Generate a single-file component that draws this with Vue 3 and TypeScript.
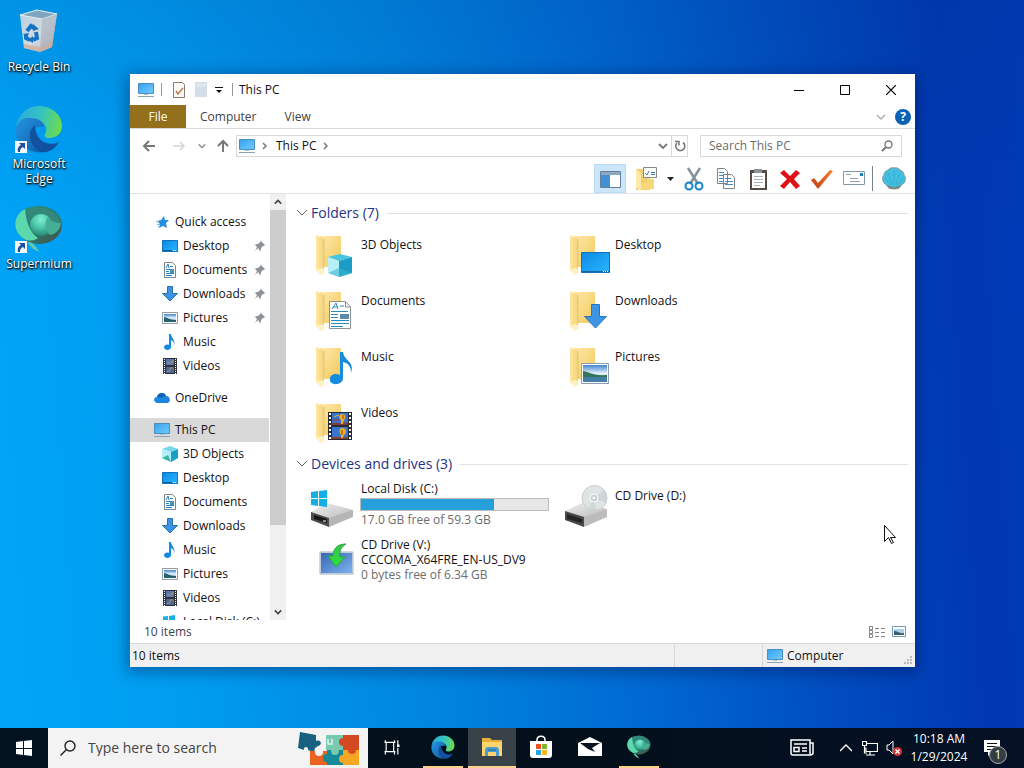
<script setup lang="ts">
import { ref } from 'vue'

interface NavItem { label: string; icon: string; pinned?: boolean }
interface NavGroup { label: string; icon: string; active?: boolean; children: NavItem[] }
interface Folder { label: string; icon: string }
interface Drive { label: string; icon: string; volume?: string; free?: string; used?: number }

const shortcuts = [
  { label: 'Recycle Bin', icon: 'bin', link: false },
  { label: 'Microsoft Edge', icon: 'edge', link: true },
  { label: 'Supermium', icon: 'supermium', link: true },
]

const navGroups: NavGroup[] = [
  {
    label: 'Quick access', icon: 'star', children: [
      { label: 'Desktop', icon: 'desktop', pinned: true },
      { label: 'Documents', icon: 'document', pinned: true },
      { label: 'Downloads', icon: 'download', pinned: true },
      { label: 'Pictures', icon: 'picture', pinned: true },
      { label: 'Music', icon: 'music' },
      { label: 'Videos', icon: 'video' },
    ],
  },
  { label: 'OneDrive', icon: 'cloud', children: [] },
  {
    label: 'This PC', icon: 'pc', active: true, children: [
      { label: '3D Objects', icon: 'cube' },
      { label: 'Desktop', icon: 'desktop' },
      { label: 'Documents', icon: 'document' },
      { label: 'Downloads', icon: 'download' },
      { label: 'Music', icon: 'music' },
      { label: 'Pictures', icon: 'picture' },
      { label: 'Videos', icon: 'video' },
      { label: 'Local Disk (C:)', icon: 'winlogo' },
    ],
  },
]

const folders: Folder[] = [
  { label: '3D Objects', icon: 'f-cube' },
  { label: 'Desktop', icon: 'f-desktop' },
  { label: 'Documents', icon: 'f-document' },
  { label: 'Downloads', icon: 'f-download' },
  { label: 'Music', icon: 'f-music' },
  { label: 'Pictures', icon: 'f-picture' },
  { label: 'Videos', icon: 'f-video' },
]

const drives: Drive[] = [
  { label: 'Local Disk (C:)', icon: 'hdd', free: '17.0 GB free of 59.3 GB', used: (59.3 - 17) / 59.3 },
  { label: 'CD Drive (D:)', icon: 'cd' },
  { label: 'CD Drive (V:)', icon: 'installer', volume: 'CCCOMA_X64FRE_EN-US_DV9', free: '0 bytes free of 6.34 GB' },
]

const tools = [
  { label: 'Navigation pane', icon: 't-pane', active: true },
  { label: 'Folder options', icon: 't-options' },
  { label: 'More options', icon: 't-drop', narrow: true },
  { label: 'Cut', icon: 't-cut' },
  { label: 'Copy', icon: 't-copy' },
  { label: 'Paste', icon: 't-paste' },
  { label: 'Delete', icon: 't-delete' },
  { label: 'Apply', icon: 't-check' },
  { label: 'Email', icon: 't-mail' },
]

const apps = [
  { label: 'Task view', icon: 'taskview' },
  { label: 'Microsoft Edge', icon: 'edge', open: true },
  { label: 'File Explorer', icon: 'explorer', open: true, active: true },
  { label: 'Store', icon: 'store' },
  { label: 'Mail', icon: 'mail' },
  { label: 'Supermium', icon: 'supermium', open: true },
]

const fileQuery = ref('')
const webQuery = ref('')
</script>

<template>
  <div class="screen">
    <svg class="defs" aria-hidden="true">
      <defs>
        <linearGradient id="gScreen" x1="0" y1="0" x2="1" y2="1"><stop offset="0" stop-color="#35a3ec" /><stop offset="1" stop-color="#72cbff" /></linearGradient>
        <linearGradient id="gDesk" x1="0" y1="0" x2="1" y2="1"><stop offset="0" stop-color="#0a8ae6" /><stop offset="1" stop-color="#2cb5ff" /></linearGradient>
        <linearGradient id="gFolder" x1="0" y1="0" x2="1" y2="1"><stop offset="0" stop-color="#ffe9a8" /><stop offset="1" stop-color="#f1c95c" /></linearGradient>
        <linearGradient id="gFlap" x1="0" y1="0" x2="1" y2="0"><stop offset="0" stop-color="#ffe7a1" /><stop offset="1" stop-color="#f3d27a" /></linearGradient>
        <linearGradient id="gBin" x1="0" y1="0" x2="1" y2="1"><stop offset="0" stop-color="#b9cfde" /><stop offset=".55" stop-color="#d2dae2" /><stop offset="1" stop-color="#b4b4b8" /></linearGradient>
        <linearGradient id="gEdgeTop" x1="0" y1=".4" x2="1" y2=".6"><stop offset="0" stop-color="#2aa9dd" /><stop offset=".5" stop-color="#35c4c0" /><stop offset="1" stop-color="#6fdc49" /></linearGradient>
        <linearGradient id="gEdgeLeft" x1="0" y1="0" x2="1" y2="1"><stop offset="0" stop-color="#2595e2" /><stop offset="1" stop-color="#0c59a4" /></linearGradient>
        <radialGradient id="gOrb" cx=".5" cy=".25" r=".8"><stop offset="0" stop-color="#7ff0cf" /><stop offset=".5" stop-color="#48c5a6" /><stop offset="1" stop-color="#227d6a" /></radialGradient>
        <linearGradient id="gDark" x1="0" y1="0" x2="1" y2="1"><stop offset="0" stop-color="#2c9482" /><stop offset=".6" stop-color="#2b7467" /><stop offset="1" stop-color="#504a40" /></linearGradient>
        <linearGradient id="gPhoto" x1="0" y1="0" x2="0" y2="1"><stop offset="0" stop-color="#3f83d0" /><stop offset=".5" stop-color="#e7f3fb" /><stop offset="1" stop-color="#7fb0d6" /></linearGradient>
        <linearGradient id="gMetal" x1="0" y1="0" x2="1" y2="1"><stop offset="0" stop-color="#f0f0f0" /><stop offset="1" stop-color="#b9b9b9" /></linearGradient>
        <linearGradient id="gInstall" x1="0" y1="0" x2="1" y2="1"><stop offset="0" stop-color="#3767b4" /><stop offset="1" stop-color="#7eb2ee" /></linearGradient>
        <linearGradient id="gGreen" x1="0" y1="0" x2="0" y2="1"><stop offset="0" stop-color="#36c44c" /><stop offset="1" stop-color="#2ee03c" /></linearGradient>
        <linearGradient id="gCheck" x1="1" y1="0" x2="0" y2="1"><stop offset="0" stop-color="#f5802e" /><stop offset="1" stop-color="#c43a12" /></linearGradient>
      </defs>

      <symbol id="bin" viewBox="0 0 48 48">
        <path d="M5 7 22 2 42 6 37 39 25 44 9 40Z" fill="url(#gBin)" />
        <path d="M5 7 22 2 42 6 27 11Z" fill="#7fa6c0" stroke="#e4eef4" />
        <path d="M27 11 42 6 37 39 25 44Z" fill="#9faab5" opacity=".5" />
        <path d="M9 36 25 39 38 34 37 39 25 44 9 40Z" fill="#d3aa98" opacity=".7" />
        <g fill="none" stroke="#1673c4" stroke-width="4"><path d="m12 23 4-5 3 2" /><path d="m21 24 1 6-4 2" /><path d="m15 32-4-2 0-4" /></g>
        <path d="m18 16 6 5-6 2zM18 28v7l-5-3zM8 26l6-1-2 5z" fill="#1673c4" />
      </symbol>

      <symbol id="edge" viewBox="0 0 48 48">
        <path d="M1 23C2 10 12 1 24 1c13 0 23 9 23 20 0 7-5 12-13 12-4 0-5-2-4-4 5-8-5-16-14-15C8 14 3 18 1 23Z" fill="url(#gEdgeTop)" />
        <path d="M1 24C2 17 8 12 16 13c8 0 13 4 13 9-8-2-15 4-13 13 2 8 8 12 15 12C14 50-1 38 1 24Z" fill="url(#gEdgeLeft)" />
        <path d="M20 20c-8 6-7 21 6 27 8 1 14-3 18-10-10 5-24 0-24-17Z" fill="#1250a0" />
      </symbol>

      <symbol id="supermium" viewBox="0 0 48 48">
        <ellipse cx="24" cy="20" rx="23" ry="19" fill="url(#gDark)" />
        <path d="M10 4C25-2 43 5 46 18c-5 1-9-2-12-6-7-3-14 2-18 8Z" fill="#32897a" />
        <path d="M10 4C11 16 15 28 23 33c-4 3-9 3-12 2C-3 28-3 11 10 4Z" fill="#5bd9ac" />
        <circle cx="26" cy="20" r="11" fill="url(#gOrb)" />
        <path d="M33 12c3 4 8 6 13 6-1 7-5 11-11 12-5-4-6-12-2-18Z" fill="#46ae95" />
        <path d="M13 37c6 0 8 6 12 10-6-2-10-5-12-10Z" fill="#64c8aa" />
      </symbol>

      <symbol id="shortcut" viewBox="0 0 12 12"><path d="M0 0h12v12H0z" fill="#f4f7fb" /><path d="M3 11C2 7 4 5 6 4L4 2h6v6L8 6C6 7 5 8 5 11Z" fill="#1c4f9c" /></symbol>

      <symbol id="pc" viewBox="0 0 18 16"><path d="M1.500 1.500h15v10h-15z" fill="url(#gScreen)" stroke="#4a8fbd" /><path d="M7 12.500h4" stroke="#b5c3cc" /><path d="M1 14.500h16" stroke="#8ba3b2" /></symbol>
      <symbol id="star" viewBox="0 0 16 16"><path d="m10 2 1 4 4 0-3 3 1 5-4-2-4 2 1-4-3-3 4-1z" fill="#278ee0" /><path d="M3 10.500h3M4 12.500h2M2 7.500h3" stroke="#79b9eb" /></symbol>
      <symbol id="desktop" viewBox="0 0 16 16"><path d="M.500 2.500h15v11H.500z" fill="url(#gDesk)" stroke="#1272bd" /><path d="M1 12.500h9" stroke="#125895" /><path d="M11 12.500h4" stroke="#fff" stroke-dasharray="1 1" /></symbol>
      <symbol id="document" viewBox="0 0 16 16"><path d="M2.500.500h8l3 3v12h-11z" fill="#fff" stroke="#7c8790" /><path d="m4 6 2-4 1 4M8 4.500h3M4 7.500h8M4 9.500h3M4 11.500h8M4 13.500h6" fill="none" stroke="#2681bc" /><path d="M8 7h4v4H8z" fill="#4b92b9" /></symbol>
      <symbol id="download" viewBox="0 0 16 16"><path d="M5.500.500h5v7h5L8 15 .500 7.500h5z" fill="#3d94e5" stroke="#2572b5" /></symbol>
      <symbol id="picture" viewBox="0 0 16 16"><path d="M.500 2.500h15v11H.500z" fill="#fff" stroke="#8e9ba5" /><path d="M2 4h12v8H2z" fill="url(#gPhoto)" /><path d="M2 7c3 0 5 3 12 3v2H2z" fill="#28616b" /></symbol>
      <symbol id="music" viewBox="0 0 16 16"><path d="M7 0h2c0 4 5 6 3 11 0-3-1-4-3-5v7c0 4-7 4-7 0 0-2 3-3 5-2z" fill="#148bdc" /></symbol>
      <symbol id="video" viewBox="0 0 16 16"><path d="M1 0h14v16H1z" fill="#30343a" /><path d="M4 1h8v6H4z" fill="#5878b5" /><path d="M4 9h8v6H4z" fill="#4763a0" /><path d="M5 5h5V3h2M5 13h3v-3h3" stroke="#a89a50" fill="none" /><path d="M2.500 1v15M13.500 1v15" stroke="#fff" stroke-dasharray="1 1" /></symbol>
      <symbol id="cloud" viewBox="0 0 16 16"><path d="M4 13C-1 13-1 7 3 7c1-5 8-5 9-1 5 0 5 7 1 7z" fill="#1d86df" /><path d="M3 7c1-5 8-5 9-1-2 0-3 1-4 2-2-1-3-1-5-1Z" fill="#0b66b8" /></symbol>
      <symbol id="cube" viewBox="0 0 16 16"><path d="m0 3 8-3 8 3-7 3z" fill="#76d8ec" /><path d="m0 3 9 3v10l-9-4z" fill="#b5effa" /><path d="m9 6 7-3v9l-7 4z" fill="#159fc3" /><path d="m0 12 6-3 3 7z" fill="#38b7aa" /></symbol>
      <symbol id="winlogo" viewBox="0 0 16 16"><path d="M1 2.500 6 2v4H1zM7 2l6-1v5H7zM1 7h5v4l-5-1zM7 7h6v5l-6-1z" fill="#18b1e5" /></symbol>
      <symbol id="pin" viewBox="0 0 12 12"><path d="m7 1 4 4-1 1-1 0-2 2 0 2-1 1-2-3-3 3 2-4-2-2 1-1 2 0 2-2z" fill="#8f9499" /></symbol>

      <symbol id="folder" viewBox="0 0 48 48"><path d="M7 4h21v31H7z" fill="url(#gFolder)" /><path d="M3 3 11 7v33l-3 3-5-5z" fill="url(#gFlap)" /><path d="M11 7v28" stroke="#e2c170" /><path d="m3 38 5-2 4 2-4 5z" fill="#fff1c6" /></symbol>
      <symbol id="f-cube" viewBox="0 0 48 48"><use href="#folder" /><path d="m15 25 12-3 12 3-13 4z" fill="#49c3e2" /><path d="m15 25 11 4v16l-11-4z" fill="#b9effa" /><path d="m26 29 13-4v16l-13 4z" fill="#199dc5" /><path d="m15 41 11-5 13 5-13 4z" fill="#38b6cf" opacity=".6" /></symbol>
      <symbol id="f-desktop" viewBox="0 0 48 48"><use href="#folder" /><path d="M14.500 20.500h28v20h-28z" fill="url(#gDesk)" stroke="#1571b4" /><path d="M15 39.500h27" stroke="#1565a4" /><path d="M36 39.500h6" stroke="#fff" stroke-dasharray="1 1" /></symbol>
      <symbol id="f-document" viewBox="0 0 48 48"><use href="#folder" /><path d="M16.500 13.500h16l5 5v22h-21z" fill="#fff" stroke="#8a9298" /><path d="M32.500 14v5h5" fill="#eef2f5" stroke="#8a9298" /><path d="m19 21 4-6 2 6m-5-2h4m3-1h4M18 23.500h17M18 26.500h7M18 29.500h7M18 32.500h18M18 35.500h18M18 38.500h12" fill="none" stroke="#2b88be" /><path d="M27 26h9v5h-9z" fill="#5b89a8" /></symbol>
      <symbol id="f-download" viewBox="0 0 48 48"><use href="#folder" /><path d="M24.500 16.500h8v12h7L28.500 40 17.500 28.500h7z" fill="#3e95e6" stroke="#2576be" /></symbol>
      <symbol id="f-music" viewBox="0 0 48 48"><use href="#folder" /><path d="M27 8h3c1 9 12 9 8 21 0-7-3-10-8-11v16c0 8-14 8-13 1 0-5 6-6 10-4z" fill="#148bdc" /></symbol>
      <symbol id="f-picture" viewBox="0 0 48 48"><use href="#folder" /><path d="M14.500 19.500h27v20h-27z" fill="#fff" stroke="#8b9fae" /><path d="M16 21h24v17H16z" fill="url(#gPhoto)" /><path d="M16 27c4 0 9 5 24 4v2H16z" fill="#357557" /><path d="M16 33h24v5H16z" fill="#437fa7" /></symbol>
      <symbol id="f-video" viewBox="0 0 48 48"><use href="#folder" /><path d="M15 12h24v28H15z" fill="#292b2f" /><path d="M19 13h16v12H19zM19 27h16v12H19z" fill="#3975cf" /><path d="M18 24c5-3 11 1 17-1v2H18zM18 37h17v2H18z" fill="#843f36" /><path d="M29 14c4 0 4 4 2 6l-1 4h-2l0-4c-2-2-2-6 1-6ZM29 28c5 0 5 5 2 7l-1 3h-2v-3c-2-2-2-7 1-7Z" fill="#e9b322" /><path d="M20 20h6m4 3h5M30 15v4M29 30v5" stroke="#b02d2d" /><path d="m21 17 4-2 2 2" fill="none" stroke="#d2b44b" /><path d="M17 13v27M37 13v27" stroke="#fff" stroke-width="2" stroke-dasharray="2 2" /></symbol>
      <symbol id="hdd" viewBox="0 0 48 48"><path d="m2 29 16-9 26 7-20 10z" fill="url(#gMetal)" /><path d="m2 29 18 6v9L2 37z" fill="#4b4b4b" /><path d="m20 35 24-8v7L20 44z" fill="#b5b5b5" /><path d="m5 32 13 4v4L5 36z" fill="#171717" /><path d="M14 38h3" stroke="#fff" /><path d="M2 9 9 8v7H2zM10 8l8-1v8h-8zM2 16h7v7l-7-1zM10 16h8v8l-8-1z" fill="#15aee2" /></symbol>
      <symbol id="cd" viewBox="0 0 48 48"><path d="m2 28 17-8 25 6-23 9z" fill="url(#gMetal)" /><path d="m2 28 19 6v10L2 37z" fill="#484848" /><path d="m21 34 23-8v8L21 44z" fill="#bcbcbc" /><path d="m4 31 15 5v4L4 36z" fill="#242424" /><circle cx="31.500" cy="15" r="12.500" fill="#dfe4e4" stroke="#c7cdce" /><path d="m31 15 10-8c3 4 4 8 2 13zM31 15l2 12-7-1z" fill="#c2cecc" opacity=".6" /><circle cx="31" cy="15" r="4" fill="#c9cece" stroke="#fff" /><circle cx="31" cy="15" r="1.500" fill="#fff" /></symbol>
      <symbol id="installer" viewBox="0 0 48 48"><path d="M7 13h33v22H7z" fill="#dbe5ec" stroke="#a3b2be" /><path d="M8 14h31v20H8z" fill="url(#gInstall)" /><path d="M33 5c-9 0-13 5-13 12h-5l8 11 9-10h-5c-1-6 1-10 6-13z" fill="url(#gGreen)" stroke="#27a741" /></symbol>

      <symbol id="t-pane" viewBox="0 0 24 24"><path d="M2.500 4.500h20v16h-20z" fill="#fff" stroke="#68819b" /><path d="M3 5h19v3H3z" fill="#8da8c1" /><path d="M3 8h9v12H3z" fill="#4391d4" /><path d="M12.500 8v12" stroke="#fff" /></symbol>
      <symbol id="t-options" viewBox="0 0 24 24"><path d="M1 2h14v21H1z" fill="#f0d070" /><path d="M1 2 6 6v18l-5-3z" fill="#ffe9a7" /><path d="M12 12h7v10H6v-6h6z" fill="#f6d879" /><path d="M8.500.500h13v10h-13z" fill="#fff" stroke="#888" /><path d="m10 6 2 2 2-4M16 5.500h4M16 7.500h4" fill="none" stroke="#397cad" /></symbol>
      <symbol id="t-drop" viewBox="0 0 12 24"><path d="M2 10h7l-3.500 4z" fill="#222" /></symbol>
      <symbol id="t-cut" viewBox="0 0 24 24"><path d="M6 1 16 17M18 1 8 17" stroke="#85939b" stroke-width="2.500" /><circle cx="7" cy="19" r="3.500" fill="none" stroke="#1685c5" stroke-width="2" /><circle cx="17" cy="19" r="3.500" fill="none" stroke="#1685c5" stroke-width="2" /></symbol>
      <symbol id="t-copy" viewBox="0 0 24 24"><path d="M3.500 1.500h7l3 3v12h-10zM9.500 7.500h8l3 3v11h-11z" fill="#fff" stroke="#79838b" /><path d="M5 5.500h5M5 8.500h4M5 11.500h4M5 14.500h4M11 11.500h6M11 14.500h8M11 17.500h8" stroke="#438dc3" /></symbol>
      <symbol id="t-paste" viewBox="0 0 24 24"><path d="M4 3h17v20H4z" fill="#574b43" /><path d="M6 6h13v15H6z" fill="#fff" /><path d="M8 2h8v4H8z" fill="#89939a" /><path d="M8 9.500h9M8 12.500h9M8 15.500h9M8 18.500h6" stroke="#a9b1b7" /></symbol>
      <symbol id="t-delete" viewBox="0 0 24 24"><path d="m6 3 6 6 6-6 4 3-6 6 6 7-4 3-6-7-6 7-4-3 7-7-7-6z" fill="#e01019" /></symbol>
      <symbol id="t-check" viewBox="0 0 24 24"><path d="m1 13 3-2 4 5L20 3l3 1L8 22z" fill="url(#gCheck)" /></symbol>
      <symbol id="t-mail" viewBox="0 0 24 24"><path d="M1.500 4.500h21v13h-21z" fill="#fff" stroke="#8298a7" /><path d="M4 7.500h5M8 11.500h8M8 14.500h10" stroke="#91a2ad" /><path d="M18 6h3v3h-3z" fill="#1681c6" /></symbol>
      <symbol id="shell" viewBox="0 0 24 24"><path d="M12 1C9 0 7 2 6 3 3 4 2 6 2 8 0 10 0 13 2 16c3 2 4 6 10 6s7-4 10-6c2-3 2-6 0-8 0-2-1-4-4-5-1-1-3-3-6-2Z" fill="#43bfe2" stroke="#8c9797" /><path d="M12 18V4M10 18 6 6M14 18l4-12M8 18l-5-7M16 18l5-7" stroke="#35aed1" /><path d="m5 18 7 2 7-2-2 4H7z" fill="#8a7461" opacity=".6" /></symbol>

      <symbol id="taskview" viewBox="0 0 24 24"><path d="M4 7V4M15 7V4M3 6.500h13M5 7v10M14 7v10M3 17.500h13M4 21v-3M15 21v-3M19 4v6M19 13v8" stroke="#fff" stroke-width="1.400" /><path d="M18 9h3v3h-3z" fill="#fff" /></symbol>
      <symbol id="explorer" viewBox="0 0 24 24"><path d="M2 3h8l2 2h10v5H2z" fill="#e9ad39" /><path d="M2 7h20v14H2z" fill="#ffd66d" /><path d="M5 21v-7l2-2h10l2 2v7h-3v-4H8v4z" fill="#4b9bcd" /><path d="M8 15h8" stroke="#226b9b" /></symbol>
      <symbol id="store" viewBox="0 0 24 24"><path d="M8 8V5c0-5 8-5 8 0v3" fill="none" stroke="#fff" stroke-width="1.500" /><path d="M1 6h22v14c0 2-1 3-3 3H4c-2 0-3-1-3-3z" fill="#fff" /><path d="M7 9h5v5H7z" fill="#ef5125" /><path d="M13 9h5v5h-5z" fill="#7cb528" /><path d="M7 15h5v5H7z" fill="#23a6dd" /><path d="M13 15h5v5h-5z" fill="#f9b817" /></symbol>
      <symbol id="mail" viewBox="0 0 24 24"><path d="m0 8 12-6 12 6v13H0z" fill="#fff" /><path d="m2 8 20 0-8 5 3 4-7-3z" fill="#071321" /></symbol>
      <symbol id="puzzle" viewBox="0 0 64 38"><path d="m3 3 16 3v6c5-2 7 4 2 5l-3 2-1 4-6-2c1-4-5-4-4 0l-6-2z" fill="#176080" /><path d="M13 22h17v14H13z" fill="#e86420" /><path d="M29 6h17v15H29z" fill="#77c9b0" /><path d="M46 6h16v15H46z" fill="#d44923" /><path d="M30 21h17v15H30z" fill="#168b98" /><path d="M46 21h16v15H46z" fill="#f5a722" /><circle cx="22" cy="23" r="4" fill="#f2f2f2" /><circle cx="30" cy="29" r="4" fill="#168b98" /><circle cx="38" cy="22" r="4" fill="#77c9b0" /><circle cx="46" cy="13" r="4" fill="#d44923" /><circle cx="46" cy="30" r="4" fill="#f5a722" /><circle cx="55" cy="21" r="4" fill="#d44923" /><path d="M31 10v5h3m1-5v6" fill="none" stroke="#dff5ed" stroke-width="1.500" /></symbol>
    </svg>

    <main class="desk">
      <nav class="shortcuts" aria-label="Desktop">
        <button v-for="item in shortcuts" :key="item.label" class="shortcut">
          <span class="shortcut-pic">
            <svg class="i48"><use :href="'#' + item.icon" /></svg>
            <svg v-if="item.link" class="shortcut-arrow"><use href="#shortcut" /></svg>
          </span>
          <span class="shortcut-label">{{ item.label }}</span>
        </button>
      </nav>

      <section class="window" aria-label="This PC">
        <header class="titlebar">
          <svg class="pc-icon"><use href="#pc" /></svg>
          <span class="vline"></span>
          <button class="plain quick" aria-label="Properties"><svg viewBox="0 0 14 16" class="sheet"><path d="M1.500.500h9l2 2v13h-11z" fill="#fbf9f6" stroke="#8a7b72" /><path d="m4 9 2 3 5-6" fill="none" stroke="#b98058" stroke-width="1.500" /></svg></button>
          <button class="plain quick" aria-label="New folder"><svg viewBox="0 0 14 16" class="sheet"><path d="M1 0h12v15H1z" fill="#d5dde8" /><path d="M2 1h10v4H2z" fill="#dfe5ee" /></svg></button>
          <button class="plain drop" aria-label="Customize"><svg viewBox="0 0 8 8" class="i8"><path d="M0 1.500h8" stroke="#111" /><path d="M1 4h6L4 7z" fill="#111" /></svg></button>
          <span class="vline"></span>
          <span class="title">This PC</span>
          <div class="caption">
            <button class="plain" aria-label="Minimize"><svg viewBox="0 0 10 10" class="i10"><path d="M0 5.500h10" stroke="#000" /></svg></button>
            <button class="plain" aria-label="Maximize"><svg viewBox="0 0 10 10" class="i10"><path d="M.500.500h9v9h-9z" fill="none" stroke="#000" /></svg></button>
            <button class="plain" aria-label="Close"><svg viewBox="0 0 10 10" class="i10"><path d="m0 0 10 10M10 0 0 10" stroke="#000" stroke-width="1.200" /></svg></button>
          </div>
        </header>

        <div class="tabs">
          <button class="tab file">File</button>
          <button class="tab">Computer</button>
          <button class="tab">View</button>
          <span class="grow"></span>
          <button class="plain" aria-label="Expand ribbon"><svg viewBox="0 0 10 10" class="i10"><path d="m1 3 4 4 4-4" fill="none" stroke="#aaa" stroke-width="1.300" /></svg></button>
          <button class="help" aria-label="Help">?</button>
        </div>

        <div class="address-row">
          <button class="plain arrow" aria-label="Back"><svg viewBox="0 0 16 16" class="i16"><path d="M14 8H3m5-5L3 8l5 5" fill="none" stroke="#777" stroke-width="2" /></svg></button>
          <button class="plain arrow" aria-label="Forward"><svg viewBox="0 0 16 16" class="i16"><path d="M2 8h11M9 4l4 4-4 4" fill="none" stroke="#d4d4d4" stroke-width="1.500" /></svg></button>
          <button class="plain recent" aria-label="Recent locations"><svg viewBox="0 0 10 10" class="i8"><path d="m1 3 4 4 4-4" fill="none" stroke="#999" stroke-width="2" /></svg></button>
          <button class="plain up" aria-label="Up"><svg viewBox="0 0 16 16" class="i16"><path d="M8 14V3M3 8l5-5 5 5" fill="none" stroke="#777" stroke-width="2" /></svg></button>
          <div class="address">
            <svg class="pc-icon"><use href="#pc" /></svg>
            <svg viewBox="0 0 8 8" class="crumb"><path d="m2 1 3 3-3 3" fill="none" stroke="#777" stroke-width="1.500" /></svg>
            <a href="#this-pc">This PC</a>
            <svg viewBox="0 0 8 8" class="crumb"><path d="m2 1 3 3-3 3" fill="none" stroke="#777" stroke-width="1.500" /></svg>
            <span class="grow"></span>
            <button class="plain previous" aria-label="Previous locations"><svg viewBox="0 0 10 10" class="i10"><path d="m1 3 4 4 4-4" fill="none" stroke="#777" stroke-width="1.800" /></svg></button>
            <button class="plain refresh" aria-label="Refresh"><svg viewBox="0 0 12 12" class="i12"><path d="M9 2.500A4.500 4.500 0 1 1 3 3" fill="none" stroke="#777" stroke-width="1.600" /><path d="M1 1.500h4v4" fill="none" stroke="#777" stroke-width="1.500" /></svg></button>
          </div>
          <label class="find">
            <input v-model="fileQuery" type="text" placeholder="Search This PC" aria-label="Search This PC" />
            <svg viewBox="0 0 12 12" class="i12"><circle cx="7.500" cy="4.500" r="3.500" fill="none" stroke="#777" stroke-width="1.400" /><path d="M5 7 1 11" stroke="#777" stroke-width="2" /></svg>
          </label>
        </div>

        <div class="toolbar">
          <button v-for="tool in tools" :key="tool.label" class="plain tool" :class="{ on: tool.active, narrow: tool.narrow }" :aria-label="tool.label">
            <svg :class="tool.narrow ? 'i12x24' : 'i24'"><use :href="'#' + tool.icon" /></svg>
          </button>
          <span class="tool-line"></span>
          <button class="plain tool" aria-label="Shell"><svg class="i24"><use href="#shell" /></svg></button>
        </div>

        <div class="body">
          <nav class="tree" aria-label="Folders">
            <ul>
              <li v-for="group in navGroups" :key="group.label" class="group">
                <a href="#folder" class="node root" :class="{ on: group.active }"><svg :class="group.icon === 'pc' ? 'pc-icon' : 'i16'"><use :href="'#' + group.icon" /></svg><span>{{ group.label }}</span></a>
                <ul v-if="group.children.length">
                  <li v-for="child in group.children" :key="child.label">
                    <a href="#folder" class="node"><svg class="i16"><use :href="'#' + child.icon" /></svg><span>{{ child.label }}</span><svg v-if="child.pinned" class="pin"><use href="#pin" /></svg></a>
                  </li>
                </ul>
              </li>
            </ul>
          </nav>
          <div class="scroll">
            <button class="plain scroll-button" aria-label="Scroll up"><svg viewBox="0 0 10 10" class="i8"><path d="m1 7 4-4 4 4" fill="none" stroke="#444" stroke-width="2" /></svg></button>
            <div class="thumb"></div>
            <div class="track"></div>
            <button class="plain scroll-button" aria-label="Scroll down"><svg viewBox="0 0 10 10" class="i8"><path d="m1 3 4 4 4-4" fill="none" stroke="#444" stroke-width="2" /></svg></button>
          </div>

          <div class="content">
            <section>
              <h2><svg viewBox="0 0 12 12" class="i12"><path d="m1 3 5 5 5-5" fill="none" stroke="#666" /></svg>Folders (7)<span class="rule"></span></h2>
              <div class="grid">
                <a v-for="folder in folders" :key="folder.label" href="#folder" class="item"><svg class="i48"><use :href="'#' + folder.icon" /></svg><span class="text">{{ folder.label }}</span></a>
              </div>
            </section>
            <section class="devices">
              <h2><svg viewBox="0 0 12 12" class="i12"><path d="m1 3 5 5 5-5" fill="none" stroke="#666" /></svg>Devices and drives (3)<span class="rule"></span></h2>
              <div class="grid">
                <a v-for="drive in drives" :key="drive.label" href="#drive" class="item" :class="{ full: drive.free, wide: drive.icon !== 'installer' }">
                  <svg class="i48"><use :href="'#' + drive.icon" /></svg>
                  <span class="text">
                    <span>{{ drive.label }}</span>
                    <span v-if="drive.used" class="meter"><span class="meter-fill" :style="{ width: drive.used * 100 + '%' }"></span></span>
                    <span v-if="drive.volume">{{ drive.volume }}</span>
                    <span v-if="drive.free" class="free">{{ drive.free }}</span>
                  </span>
                </a>
              </div>
            </section>
          </div>
        </div>

        <div class="summary">
          <span>10 items</span>
          <span class="grow"></span>
          <button class="plain view" aria-label="Details"><svg viewBox="0 0 16 14" class="view-icon"><path d="M.500 1.500h3v3h-3zM.500 5.500h3v3h-3zM.500 9.500h3v3h-3z" fill="none" stroke="#888" /><path d="M6 3.500h10M6 7.500h10M6 11.500h10" stroke="#888" stroke-dasharray="4 2" /></svg></button>
          <button class="plain view" aria-label="Large icons"><svg viewBox="0 0 14 12" class="large-icon"><path d="M.500.500h13v10H.500z" fill="#fff" stroke="#6e9cbb" /><path d="M2 3h10v6H2z" fill="#a8d0e8" /><path d="M2 5c4 0 5 3 10 2v2H2z" fill="#3c5c70" /></svg></button>
        </div>
        <footer class="status">
          <span class="status-count">10 items</span>
          <span class="status-mid"></span>
          <span class="status-zone"><svg class="pc-icon"><use href="#pc" /></svg>Computer</span>
          <svg viewBox="0 0 10 10" class="grip"><path d="M7 1h2v2H7zM4 4h2v2H4zM7 4h2v2H7zM1 7h2v2H1zM4 7h2v2H4zM7 7h2v2H7z" fill="#bbb" /></svg>
        </footer>
      </section>
      <svg class="pointer" viewBox="0 0 12 19"><path d="M.500.500v16l4-4 3 6 2-1-3-5h5z" fill="#fff" stroke="#111" /></svg>
    </main>

    <footer class="taskbar">
      <button class="plain start" aria-label="Start"><svg viewBox="0 0 16 16" class="i16"><path d="m0 2 7-1v7H0zM8 1l8-1v8H8zM0 9h7v6l-7-1zM8 9h8v7l-8-1z" fill="#fff" /></svg></button>
      <label class="search">
        <svg viewBox="0 0 16 16" class="i16"><circle cx="10" cy="6" r="5" fill="none" stroke="#222" stroke-width="1.400" /><path d="m6.500 9.500-6 6" stroke="#222" stroke-width="1.400" /></svg>
        <input v-model="webQuery" type="text" placeholder="Type here to search" aria-label="Type here to search" />
        <svg class="puzzle"><use href="#puzzle" /></svg>
      </label>
      <nav class="apps" aria-label="Applications">
        <button v-for="app in apps" :key="app.label" class="plain app" :class="{ open: app.open, active: app.active }" :aria-label="app.label"><svg :class="app.icon === 'taskview' ? 'i20' : 'i24'"><use :href="'#' + app.icon" /></svg></button>
      </nav>
      <span class="grow"></span>
      <div class="tray">
        <button class="plain news" aria-label="News"><svg viewBox="0 0 24 18" class="news-icon"><path d="M1 1h19v15H3c-1 0-2-1-2-2zM20 4h3v10c0 1-1 2-3 2" fill="none" stroke="#fff" stroke-width="1.500" /><path d="M4 5h13M12 9h5M12 12h5M4 8.500h5v4H4z" fill="none" stroke="#fff" stroke-width="1.500" /></svg></button>
        <button class="plain tray-button" aria-label="Hidden icons"><svg viewBox="0 0 12 12" class="i12"><path d="m0 9 6-6 6 6" fill="none" stroke="#fff" stroke-width="1.400" /></svg></button>
        <button class="plain tray-button" aria-label="Network"><svg viewBox="0 0 16 16" class="i16"><path d="M5 3.500h10.500v8H4v-4M8 12v3m-4 0h9M.500 1.500h4v4h-4zM2.500 6v7H5" fill="none" stroke="#fff" stroke-width="1.200" /></svg></button>
        <button class="plain tray-button" aria-label="Volume muted"><svg viewBox="0 0 16 16" class="i16"><path d="M1 5h2l4-4v13l-4-4H1z" fill="none" stroke="#fff" /><circle cx="11.500" cy="11.500" r="4.500" fill="#cf3537" /><path d="m9.500 9.500 4 4m0-4-4 4" stroke="#fff" stroke-width="1.300" /></svg></button>
        <time class="clock" datetime="2024-01-29T10:18"><span>10:18 AM</span><span>1/29/2024</span></time>
        <button class="plain notice" aria-label="1 notification"><svg viewBox="0 0 16 16" class="i16"><path d="M0 0h16v12h-8l-4 4v-4H0z" fill="#fff" /><path d="M3 3.500h10M3 6.500h10M3 9.500h6" stroke="#07111c" /></svg><span class="badge">1</span></button>
      </div>
    </footer>
  </div>
</template>

<style>
body { margin: 0; }
</style>

<style scoped>
* { box-sizing: border-box; }
.screen { display: flex; flex-direction: column; min-height: 100vh; overflow: hidden; font: 12px/16px "Open Sans", "Noto Sans", sans-serif; color: #111; background: linear-gradient(rgba(0, 50, 130, .14), transparent 30%), linear-gradient(86deg, #00a6f8 0%, #009cf0 18%, #0086e0 40%, #0069d2 60%, #0049be 80%, #0038b2 92%, #003ab6 100%); }
.defs { position: absolute; width: 0; height: 0; }
svg { display: block; flex: none; }
button, input { font: inherit; color: inherit; }
a { color: inherit; text-decoration: none; }
ul { margin: 0; padding: 0; list-style: none; }
.plain { display: flex; align-items: center; justify-content: center; padding: 0; border: 0; background: none; }
.grow { flex: 1; }
.i8 { width: 8px; height: 8px; }
.i10 { width: 10px; height: 10px; }
.i12 { width: 12px; height: 12px; }
.i16 { width: 16px; height: 16px; }
.i20 { width: 20px; height: 20px; }
.i24 { width: 24px; height: 24px; }
.i48 { width: 48px; height: 48px; }
.i12x24 { width: 12px; height: 24px; }
.pc-icon { width: 18px; height: 16px; }

.desk { position: relative; flex: 1; min-height: 680px; }
.shortcuts { display: flex; flex-direction: column; width: 78px; padding-top: 8px; }
.shortcut { display: flex; flex-direction: column; align-items: center; gap: 3px; min-height: 97px; padding: 0; border: 0; background: none; }
.shortcut:nth-child(2) { min-height: 100px; }
.shortcut-pic { position: relative; }
.shortcut-arrow { position: absolute; left: 0; bottom: 0; width: 12px; height: 12px; }
.shortcut-label { max-width: 72px; line-height: 15px; color: #fff; text-shadow: 1px 1px 2px #000, 0 1px 2px #000; }

.window { position: absolute; left: 129px; top: 74px; right: 109px; bottom: 61px; display: flex; flex-direction: column; background: #fff; border-left: 1px solid #0b7fb8; box-shadow: 0 3px 14px 2px rgba(0, 15, 60, .4); }
.titlebar { display: flex; align-items: center; height: 31px; padding-left: 7px; }
.vline { width: 1px; height: 13px; margin: 0 6px; background: #999; }
.quick { width: 22px; }
.sheet { width: 14px; height: 16px; }
.drop { width: 14px; }
.title { flex: 1; }
.caption { display: flex; padding-right: 1px; }
.caption button { width: 46px; height: 30px; }
.tabs { display: flex; align-items: center; height: 24px; padding-right: 4px; border-bottom: 1px solid #dadbdc; color: #444; }
.tab { height: 23px; padding: 0 14px; border: 0; background: none; }
.file { width: 56px; color: #fff; background: #92701c; }
.help { width: 16px; height: 16px; margin-left: 9px; padding: 0; border: 0; border-radius: 50%; background: #0b62b5; color: #fff; font-weight: 700; line-height: 16px; }
.address-row { display: flex; align-items: center; height: 34px; padding: 0 13px 0 4px; }
.arrow { width: 30px; }
.recent { width: 16px; }
.up { width: 26px; }
.address { display: flex; flex: 1; align-items: center; height: 22px; border: 1px solid #d9d9d9; padding-left: 1px; }
.crumb { width: 8px; height: 8px; margin: 0 7px 0 5px; }
.previous { width: 17px; height: 20px; }
.refresh { width: 16px; height: 20px; border-left: 1px solid #d9d9d9; }
.find { display: flex; align-items: center; width: 202px; height: 22px; margin-left: 12px; padding: 0 8px; border: 1px solid #d9d9d9; }
.find input { flex: 1; min-width: 0; padding: 0; border: 0; outline: 0; background: none; }
.find input::placeholder { color: #6d6d6d; opacity: 1; }
.toolbar { display: flex; align-items: flex-end; justify-content: flex-end; height: 31px; padding-right: 5px; border-bottom: 1px solid #dfe3e8; }
.tool { width: 32px; height: 29px; }
.tool.narrow { width: 15px; }
.tool:nth-child(2) { margin-left: 5px; }
.tool.on { border: 1px solid #b9dcf4; background: #cce6f9; }
.tool-line { width: 1px; height: 25px; margin: 0 5px 2px 2px; background: #76828b; }

.body { display: flex; flex: 1; min-height: 0; }
.tree { width: 139px; padding-top: 16px; overflow: hidden; }
.group + .group { margin-top: 8px; }
.node { display: flex; align-items: center; gap: 5px; height: 24px; padding-left: 32px; white-space: nowrap; }
.node.root { padding-left: 24px; }
.node.root .pc-icon { margin-left: -1px; margin-right: -1px; }
.node.on { background: #d9d9d9; }
.pin { width: 12px; height: 12px; margin-left: auto; margin-right: 3px; }
.scroll { display: flex; flex-direction: column; width: 16px; margin-left: 1px; background: #f0f0f0; }
.scroll-button { height: 16px; }
.thumb { flex: 4; background: #cdcdcd; }
.track { flex: 1; }
.content { flex: 1; min-width: 0; padding: 8px 7px 0 10px; }
h2 { display: flex; align-items: center; gap: 3px; height: 22px; margin: 0; font-size: 14px; font-weight: 400; line-height: 22px; color: #1e3287; white-space: nowrap; }
.rule { flex: 1; height: 1px; margin-left: 5px; background: #e2e2e2; }
.grid { display: grid; grid-template-columns: repeat(auto-fill, 254px); }
.item { display: flex; height: 56px; padding: 8px 0 0 17px; }
.item .text { display: flex; flex-direction: column; flex: 1; padding-top: 5px; }
.devices { padding-top: 5px; }
.devices .item { padding-top: 7px; }
.devices .item.wide { padding-left: 13px; }
.devices .item.wide .text { padding-left: 4px; }
.devices .item .text { padding-top: 7px; padding-right: 1px; }
.devices .item.full .text { padding-top: 0; line-height: 15px; }
.devices .item.full .i48, .devices .item .i48 { margin-top: 2px; }
.devices h2 { margin-bottom: -1px; }
.meter { height: 13px; margin: 2px 0 1px -1px; border: 1px solid #bcbcbc; background: #e6e6e6; }
.meter-fill { display: block; height: 100%; background: #26a0da; }
.free { color: #6d6d6d; line-height: 16px; }
.summary { display: flex; align-items: center; height: 23px; padding: 0 9px 0 14px; color: #3f3f4c; }
.view { margin-left: 7px; }
.view-icon { width: 16px; height: 14px; }
.large-icon { width: 14px; height: 12px; }
.status { position: relative; display: flex; height: 24px; border-top: 1px solid #d7d7d7; background: #f0f0f0; line-height: 24px; }
.status-count { flex: 1; padding-left: 2px; }
.status-mid { width: 88px; border-left: 1px solid #d7d7d7; }
.status-zone { display: flex; align-items: center; gap: 3px; width: 153px; padding-left: 3px; border-left: 1px solid #d7d7d7; }
.grip { position: absolute; right: 2px; bottom: 2px; width: 10px; height: 10px; }
.pointer { position: absolute; left: 884px; top: 525px; width: 12px; height: 19px; }

.taskbar { display: flex; height: 40px; background: linear-gradient(90deg, #02131f, #030f1a 60%, #041126); color: #fff; }
.start { width: 48px; }
.search { display: flex; align-items: center; width: 320px; padding: 0 7px 0 12px; background: #f3f3f3; color: #333; }
.search input { flex: 1; min-width: 0; margin-left: 12px; padding: 0; border: 0; outline: 0; background: none; font-size: 14px; }
.search input::placeholder { color: #444; opacity: 1; }
.puzzle { width: 64px; height: 38px; }
.apps { display: flex; gap: 1px; }
.app { width: 48px; height: 40px; border-bottom: 2px solid transparent; }
.app:first-child { margin-right: 2px; }
.app.open { background: linear-gradient(#ffd18a, #ffd18a) bottom / 40px 2px no-repeat border-box; }
.app.active { background: #394249; border-color: #ffd18a; }
.tray { display: flex; align-items: center; }
.news { width: 40px; margin-right: 12px; }
.news-icon { width: 24px; height: 18px; }
.tray-button { width: 24px; height: 40px; }
.clock { display: flex; flex-direction: column; align-items: center; width: 66px; line-height: 18px; white-space: nowrap; }
.notice { position: relative; width: 40px; height: 40px; margin-right: 12px; }
.badge { position: absolute; left: 17px; top: 18px; width: 18px; height: 18px; border: 1px solid #aaa; border-radius: 50%; background: #333d45; line-height: 16px; }
</style>
